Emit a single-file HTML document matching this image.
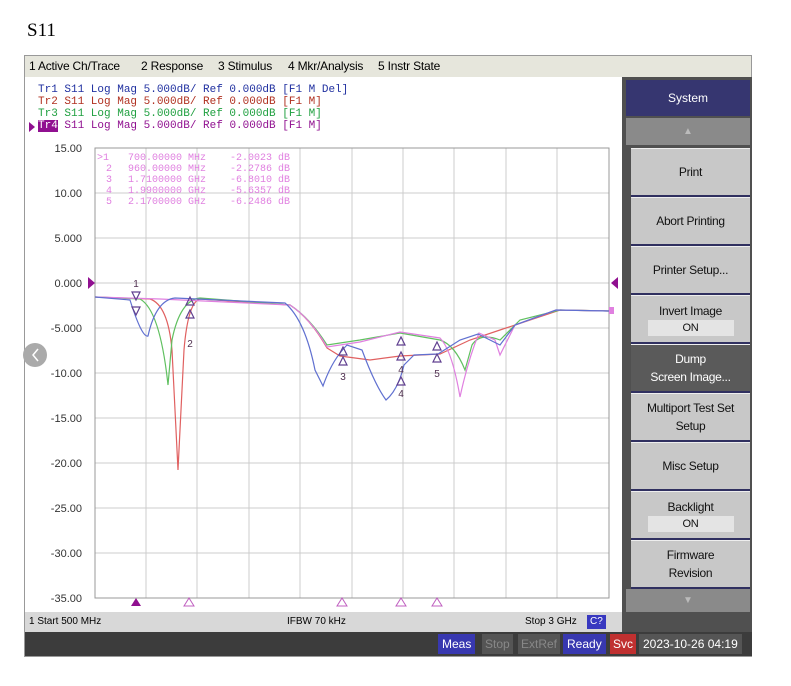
<!DOCTYPE html>
<html><head><style>
body{margin:0;width:791px;height:686px;background:#fff;position:relative;overflow:hidden;font-family:"Liberation Sans",sans-serif}
.a{position:absolute}
.btn{position:absolute;left:631px;width:119px;background:#c8c8c8;border-top:1px solid #eee;border-bottom:2px solid #303060;color:#111;font-size:12px;text-align:center;display:flex;flex-direction:column;justify-content:center;align-items:center;line-height:18px;letter-spacing:-0.3px}
.on{background:#e4e4e4;width:86px;height:16px;line-height:16px;font-size:11px}
.mono{font-family:"Liberation Mono",monospace;font-size:11px;line-height:12px;white-space:pre}
.mt{position:absolute;top:0;letter-spacing:-0.2px}
</style></head><body>
<div class="a" style="left:27px;top:20px;font-family:'Liberation Serif',serif;font-size:19px">S11</div>
<div class="a" style="left:24px;top:55px;width:728px;height:602px;background:#fff;border:1px solid #999;box-sizing:border-box"></div>
<div class="a" style="left:25px;top:56px;width:726px;height:21px;background:#e6e6dc;font-size:12px;line-height:21px">
<span class="mt" style="left:4px">1 Active Ch/Trace</span><span class="mt" style="left:116px">2 Response</span><span class="mt" style="left:193px">3 Stimulus</span><span class="mt" style="left:263px">4 Mkr/Analysis</span><span class="mt" style="left:353px">5 Instr State</span></div>
<div class="a mono" style="left:38px;top:84px"><span style="color:#2030a0">Tr1 S11 Log Mag 5.000dB/ Ref 0.000dB [F1 M Del]</span>
<span style="color:#b03020">Tr2 S11 Log Mag 5.000dB/ Ref 0.000dB [F1 M]</span>
<span style="color:#20a040">Tr3 S11 Log Mag 5.000dB/ Ref 0.000dB [F1 M]</span>
<span style="color:#901090"><span style="background:#901090;color:#fff">Tr4</span> S11 Log Mag 5.000dB/ Ref 0.000dB [F1 M]</span></div>
<div class="a" style="left:29px;top:122px;width:0;height:0;border-left:6px solid #901090;border-top:5px solid transparent;border-bottom:5px solid transparent"></div>
<svg class="a" style="left:0;top:0" width="791" height="686">
<g stroke="#ccc" stroke-width="1">
<line x1="146" y1="148" x2="146" y2="598"/><line x1="197" y1="148" x2="197" y2="598"/><line x1="249" y1="148" x2="249" y2="598"/><line x1="300" y1="148" x2="300" y2="598"/><line x1="352" y1="148" x2="352" y2="598"/><line x1="403" y1="148" x2="403" y2="598"/><line x1="454" y1="148" x2="454" y2="598"/><line x1="506" y1="148" x2="506" y2="598"/><line x1="557" y1="148" x2="557" y2="598"/>
<line x1="95" y1="193" x2="609" y2="193"/><line x1="95" y1="238" x2="609" y2="238"/><line x1="95" y1="283" x2="609" y2="283"/><line x1="95" y1="328" x2="609" y2="328"/><line x1="95" y1="373" x2="609" y2="373"/><line x1="95" y1="418" x2="609" y2="418"/><line x1="95" y1="463" x2="609" y2="463"/><line x1="95" y1="508" x2="609" y2="508"/><line x1="95" y1="553" x2="609" y2="553"/>
</g>
<rect x="95" y="148" width="514" height="450" fill="none" stroke="#999"/>
<g font-family="Liberation Sans" font-size="11" fill="#333" text-anchor="end">
<text x="82" y="152">15.00</text><text x="82" y="197">10.00</text><text x="82" y="242">5.000</text><text x="82" y="287">0.000</text><text x="82" y="332">-5.000</text><text x="82" y="377">-10.00</text><text x="82" y="422">-15.00</text><text x="82" y="467">-20.00</text><text x="82" y="512">-25.00</text><text x="82" y="557">-30.00</text><text x="82" y="602">-35.00</text></g>
<g font-family="Liberation Mono" font-size="10" fill="#e080e0">
<text x="97" y="160">&gt;1</text><text x="106" y="171">2</text><text x="106" y="182">3</text><text x="106" y="193">4</text><text x="106" y="204">5</text>
<text x="128" y="160">700.00000 MHz</text><text x="128" y="171">960.00000 MHz</text><text x="128" y="182">1.7100000 GHz</text><text x="128" y="193">1.9900000 GHz</text><text x="128" y="204">2.1700000 GHz</text>
<text x="230" y="160">-2.0023 dB</text><text x="230" y="171">-2.2786 dB</text><text x="230" y="182">-6.8010 dB</text><text x="230" y="193">-5.6357 dB</text><text x="230" y="204">-6.2486 dB</text></g>
<g fill="none" stroke-width="1.2">
<path stroke="#e06060" d="M95 297 L150 299 Q168 305 172 350 L178 470 L184 350 Q188 302 200 299 L290 305 Q310 318 327 348 L340 356 L370 360 L400 356 L440 354 L470 340 L500 330 L560 310 L609 311"/>
<path stroke="#60c060" d="M95 297 L140 299 Q160 310 168 385 L172 340 Q180 300 200 298 L290 305 Q310 318 327 345 L360 340 L400 333 L440 340 Q455 345 465 370 L472 345 Q480 332 500 340 L520 320 L560 310 L609 311"/>
<path stroke="#e080e0" d="M95 297 L160 299 L290 305 Q310 318 327 347 L360 342 L400 332 L440 338 Q452 350 460 397 Q468 360 479 333 L495 340 L500 355 L515 325 L556 310 L609 311"/>
<path stroke="#6070d0" d="M95 297 L130 300 Q142 338 148 336 Q156 300 175 298 L285 303 Q305 320 315 370 L323 386 Q332 360 347 345 L362 350 Q375 385 386 400 Q398 390 404 365 L414 355 L438 354 L460 340 L478 334 L500 345 L515 325 L556 310 L609 311"/>
</g>
<g font-family="Liberation Sans" font-size="10" fill="#503050" text-anchor="middle">
<text x="136" y="287">1</text><text x="190" y="347">2</text><text x="343" y="380">3</text><text x="401" y="373">4</text><text x="401" y="397">4</text><text x="437" y="377">5</text></g>
<g fill="none" stroke="#604090" stroke-width="1.2">
<path d="M132 292 h8 l-4 8z"/><path d="M132 307 h8 l-4 8z"/><path d="M186 305 h8 l-4 -8z"/><path d="M186 318 h8 l-4 -8z"/>
<path d="M339 355 h8 l-4 -8z"/><path d="M339 365 h8 l-4 -8z"/><path d="M397 345 h8 l-4 -8z"/><path d="M397 360 h8 l-4 -8z"/><path d="M397 385 h8 l-4 -8z"/><path d="M433 350 h8 l-4 -8z"/><path d="M433 362 h8 l-4 -8z"/></g>
<path d="M131 606 h10 l-5 -8z" fill="#901090"/>
<g fill="none" stroke="#c060c0"><path d="M184 606 h10 l-5 -8z"/><path d="M337 606 h10 l-5 -8z"/><path d="M396 606 h10 l-5 -8z"/><path d="M432 606 h10 l-5 -8z"/></g>
<path d="M88 277 v12 l7 -6z" fill="#901090"/><path d="M618 277 v12 l-7 -6z" fill="#901090"/>
<rect x="609" y="307" width="5" height="7" fill="#e080e0"/>
<circle cx="35" cy="355" r="12" fill="#aaa"/><path d="M38 349 l-5 6 l5 6" stroke="#fff" stroke-width="1.5" fill="none"/>
</svg>
<div class="a" style="left:622px;top:77px;width:130px;height:535px;background:#505050"></div>
<div class="a" style="left:626px;top:80px;width:124px;height:36px;background:#363670;color:#fff;font-size:12px;text-align:center;line-height:36px">System</div>
<div class="a" style="left:626px;top:118px;width:124px;height:27px;background:#8a8a8a;color:#bbb;font-size:10px;text-align:center;line-height:27px">▲</div>
<div class="btn" style="top:148px;height:46px">Print</div>
<div class="btn" style="top:197px;height:46px">Abort Printing</div>
<div class="btn" style="top:246px;height:46px">Printer Setup...</div>
<div class="btn" style="top:295px;height:46px">Invert Image<div class="on">ON</div></div>
<div class="btn" style="top:344px;height:46px;background:#5a5a5a;color:#fff">Dump<br>Screen Image...</div>
<div class="btn" style="top:393px;height:46px">Multiport Test Set<br>Setup</div>
<div class="btn" style="top:442px;height:46px">Misc Setup</div>
<div class="btn" style="top:491px;height:46px">Backlight<div class="on">ON</div></div>
<div class="btn" style="top:540px;height:46px">Firmware<br>Revision</div>
<div class="a" style="left:626px;top:589px;width:124px;height:23px;background:#8a8a8a;color:#bbb;font-size:10px;text-align:center;line-height:23px">▼</div>
<div class="a" style="left:25px;top:612px;width:598px;height:20px;background:#d8d8d8;font-size:10px;line-height:20px">
<span class="a" style="left:4px">1 Start 500 MHz</span><span class="a" style="left:262px">IFBW 70 kHz</span><span class="a" style="left:500px">Stop 3 GHz</span><span class="a" style="left:562px;top:3px;height:14px;line-height:14px;background:#3838c0;color:#fff;padding:0 3px">C?</span></div>
<div class="a" style="left:622px;top:612px;width:130px;height:20px;background:#505050"></div>
<div class="a" style="left:25px;top:632px;width:727px;height:24px;background:#3c3c3c;font-size:12px;color:#fff;line-height:20px">
<span class="a" style="left:413px;top:2px;background:#3838b0;padding:0 4px">Meas</span>
<span class="a" style="left:457px;top:2px;background:#555;color:#888;padding:0 3px">Stop</span>
<span class="a" style="left:493px;top:2px;background:#555;color:#888;padding:0 3px">ExtRef</span>
<span class="a" style="left:538px;top:2px;background:#3838b0;padding:0 4px">Ready</span>
<span class="a" style="left:585px;top:2px;background:#c03030;padding:0 3px">Svc</span>
<span class="a" style="left:614px;top:2px;background:#555;padding:0 4px">2023-10-26 04:19</span></div>
</body></html>
